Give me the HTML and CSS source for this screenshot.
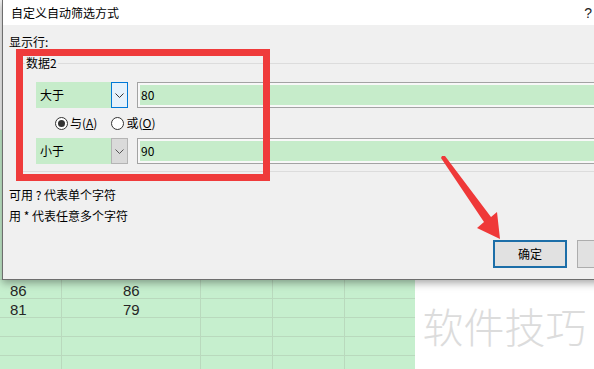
FILE: index.html
```html
<!DOCTYPE html>
<html lang="zh-CN">
<head>
<meta charset="utf-8">
<title>自定义自动筛选方式</title>
<link rel="stylesheet" href="styles.css">
</head>
<body>
<div class="screen">
  <div class="sheet">
    <div class="grid">
      <div class="sheet-head"></div>
      <div class="sheet-upper"></div>
      <div class="row"><div class="c c1"></div><div class="c c2"></div><div class="c c3"></div><div class="c c4"></div><div class="c c5"></div></div>
      <div class="row"><div class="c c1">86</div><div class="c c2">86</div><div class="c c3"></div><div class="c c4"></div><div class="c c5"></div></div>
      <div class="row"><div class="c c1">81</div><div class="c c2">79</div><div class="c c3"></div><div class="c c4"></div><div class="c c5"></div></div>
      <div class="row"><div class="c c1"></div><div class="c c2"></div><div class="c c3"></div><div class="c c4"></div><div class="c c5"></div></div>
      <div class="row"><div class="c c1"></div><div class="c c2"></div><div class="c c3"></div><div class="c c4"></div><div class="c c5"></div></div>
      <div class="row"><div class="c c1"></div><div class="c c2"></div><div class="c c3"></div><div class="c c4"></div><div class="c c5"></div></div>
    </div>
    <div class="blank"><span class="watermark">软件技巧</span></div>
  </div>

  <div class="dialog">
    <div class="titlebar">
      <span class="title">自定义自动筛选方式</span>
      <span class="help-icon">?</span>
    </div>
    <div class="dialog-body">
      <div class="label-show">显示行:</div>
      <fieldset class="group">
        <legend>数据2</legend>
        <div class="field-row">
          <div class="combo">
            <div class="combo-value">大于</div>
            <div class="combo-btn focus"><svg width="9" height="5" viewBox="0 0 9 5"><polyline points="0.5,0.5 4.5,4.5 8.5,0.5" fill="none" stroke="#333" stroke-width="1"/></svg></div>
          </div>
          <div class="textbox"><div class="textbox-fill">80</div></div>
        </div>
        <div class="radio-row">
          <div class="radio"><span class="radio-dot checked"></span><span>与(<u>A</u>)</span></div>
          <div class="radio"><span class="radio-dot"></span><span>或(<u>O</u>)</span></div>
        </div>
        <div class="field-row">
          <div class="combo">
            <div class="combo-value">小于</div>
            <div class="combo-btn idle"><svg width="9" height="5" viewBox="0 0 9 5"><polyline points="0.5,0.5 4.5,4.5 8.5,0.5" fill="none" stroke="#555" stroke-width="1"/></svg></div>
          </div>
          <div class="textbox"><div class="textbox-fill">90</div></div>
        </div>
      </fieldset>
      <div class="help">
        <div>可用 ? 代表单个字符</div>
        <div>用 * 代表任意多个字符</div>
      </div>
      <div class="buttons">
        <div class="btn default">确定</div>
        <div class="btn" aria-label="取消"></div>
      </div>
    </div>
  </div>

  <div class="highlight"></div>
  <svg class="arrow" width="594" height="369" viewBox="0 0 594 369">
    <polygon points="442,156 445,156 491,217 497,212 500,239 477,228 484,222 441,158" fill="#ef3939"/>
  </svg>
</div>
</body>
</html>
```
FILE: styles.css
```css
html, body {
  margin: 0;
  padding: 0;
}
body {
  width: 594px;
  height: 369px;
  overflow: hidden;
  background: #fff;
  font-family: "Noto Sans CJK SC", "Noto Sans", sans-serif;
}
.screen {
  position: relative;
  width: 594px;
  height: 369px;
  overflow: hidden;
}

/* spreadsheet behind */
.sheet {
  display: flex;
  height: 369px;
}
.grid {
  width: 415px;
  flex: none;
  display: flex;
  flex-direction: column;
  background: #c6efce;
}
.sheet-head {
  height: 130px;
  flex: none;
  background: #f4f4f4;
}
.sheet-upper {
  height: 131px;
  flex: none;
}
.row {
  display: flex;
  height: 19px;
  flex: none;
  box-sizing: border-box;
  border-bottom: 1px solid #b9d9bd;
}
.c {
  box-sizing: border-box;
  border-right: 1px solid #b9d9bd;
  font-family: "Liberation Sans", sans-serif;
  font-size: 15px;
  line-height: 14px;
  padding-top: 4px;
  color: #262626;
}
.c1 { width: 62px; padding-left: 10px; }
.c2 { width: 139px; padding-left: 61px; }
.c3 { width: 72px; }
.c4 { width: 72px; }
.c5 { width: 70px; border-right: none; }

.blank {
  flex: 1;
  display: flex;
  flex-direction: column;
  justify-content: flex-end;
  align-items: center;
  padding-bottom: 21px;
}
.watermark {
  font-size: 41px;
  line-height: 46px;
  font-weight: 300;
  color: #dcdcdc;
}

/* dialog window */
.dialog {
  position: absolute;
  left: 2px;
  top: 0;
  width: 660px;
  height: 280px;
  box-sizing: border-box;
  border: 1px solid #6e6e6e;
  border-top: none;
  background: #f0f0f0;
  box-shadow: 0 3px 8px rgba(0, 0, 0, 0.35);
  display: flex;
  flex-direction: column;
  font-size: 12px;
  line-height: 16px;
  color: #000;
}
.titlebar {
  height: 25px;
  flex: none;
  background: #fff;
  display: flex;
  align-items: center;
  justify-content: space-between;
  padding: 0 69px 0 8px;
}
.help-icon {
  font-family: "Liberation Sans", sans-serif;
  font-size: 14px;
  color: #222;
}
.dialog-body {
  padding: 9px 0 0 6px;
}
.group {
  margin: 5px 0 0 10px;
  padding: 11px 0 7px 5px;
  border: 1px solid #dcdcdc;
  min-width: 0;
}
.group legend {
  padding: 0 1px;
  line-height: 16px;
}
.field-row {
  display: flex;
  height: 26px;
  margin-left: 11px;
}
.combo {
  display: flex;
  width: 92px;
  flex: none;
  height: 26px;
}
.combo-value {
  flex: 1;
  background: #c6ecca;
  padding-left: 4px;
  line-height: 26px;
}
.combo-btn {
  width: 17px;
  box-sizing: border-box;
  border: 1px solid;
  display: flex;
  align-items: center;
  justify-content: center;
}
.combo-btn.focus {
  border-color: #0078d7;
  background: #e5f1fb;
}
.combo-btn.idle {
  border-color: #b4b4b4;
  background: #dadada;
}
.textbox {
  margin-left: 9px;
  flex: 1;
  height: 26px;
  box-sizing: border-box;
  border: 1px solid #a3a3a3;
  background: #f8f8f8;
  padding: 2px;
  display: flex;
}
.textbox-fill {
  flex: 1;
  background: #c6ecca;
  padding-left: 1px;
  line-height: 20px;
}
.radio-row {
  height: 30px;
  display: flex;
  align-items: center;
  gap: 14px;
  padding-left: 30px;
}
.radio {
  display: flex;
  align-items: center;
  gap: 2px;
}
.radio-dot {
  width: 13px;
  height: 13px;
  box-sizing: border-box;
  border: 1px solid #333;
  border-radius: 50%;
  background: #fff;
  display: flex;
  align-items: center;
  justify-content: center;
}
.radio-dot.checked::after {
  content: "";
  width: 7px;
  height: 7px;
  border-radius: 50%;
  background: #333;
}
.help {
  margin-top: 12px;
  line-height: 21px;
}
.buttons {
  display: flex;
  gap: 10px;
  margin-top: 14px;
  padding-left: 484px;
}
.btn {
  width: 74px;
  height: 28px;
  flex: none;
  box-sizing: border-box;
  border: 1px solid #adadad;
  background: #e1e1e1;
  display: flex;
  align-items: center;
  justify-content: center;
}
.btn.default {
  border: 2px solid #1c6ea8;
}

/* annotations */
.highlight {
  position: absolute;
  left: 16px;
  top: 49px;
  width: 254px;
  height: 132px;
  box-sizing: border-box;
  border: 7px solid #ef3b3b;
}
.arrow {
  position: absolute;
  left: 0;
  top: 0;
  pointer-events: none;
}
```
